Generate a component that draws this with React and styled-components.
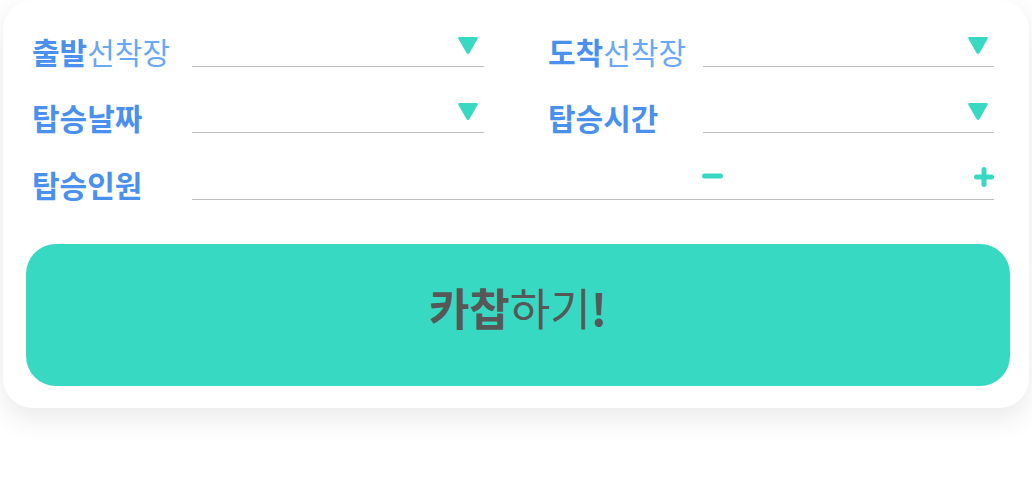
import React, { useState } from 'react';
import styled, { createGlobalStyle } from 'styled-components';

const GlobalStyle = createGlobalStyle`
  html, body {
    margin: 0;
    padding: 0;
    background: #ffffff;
    font-family: "Noto Sans CJK KR", "Noto Sans", sans-serif;
  }
`;

const Page = styled.div`
  width: 1032px;
  height: 496px;
  overflow: hidden;
  background: #ffffff;
`;

const Card = styled.div`
  margin: 0 3px;
  height: 408px;
  box-sizing: border-box;
  background: #ffffff;
  border-radius: 30px;
  box-shadow: 0 10px 28px rgba(0, 0, 0, 0.09);
  padding: 0 19px 22px 23px;
  display: flex;
  flex-direction: column;
`;

const Form = styled.div`
  padding: 0 16px 0 6px;
  display: flex;
  flex-direction: column;
`;

const Row = styled.div`
  display: flex;
  height: ${(p) => p.$h || 66}px;
  align-items: flex-end;
  gap: 64px;
`;

const Field = styled.div`
  display: flex;
  align-items: flex-end;
  width: ${(p) => (p.$w ? `${p.$w}px` : 'auto')};
  flex: ${(p) => (p.$w ? 'none' : 1)};
`;

const Label = styled.div`
  width: ${(p) => p.$w}px;
  flex-shrink: 0;
  font-size: 30px;
  line-height: 1;
  color: #4a90ee;
  font-weight: 700;
  padding-bottom: ${(p) => p.$pb || 1}px;
  white-space: nowrap;
`;

const Light = styled.span`
  font-weight: 400;
  color: #6aa7f4;
`;

const Line = styled.div`
  flex: 1;
  height: 40px;
  border-bottom: 1px solid #bdbdbd;
  display: flex;
  align-items: flex-start;
  justify-content: ${(p) => p.$justify || 'flex-end'};
  box-sizing: border-box;
  padding-right: ${(p) => p.$pr}px;
  padding-left: ${(p) => p.$pl || 0}px;
`;

const IconButton = styled.button`
  border: none;
  background: none;
  padding: 0;
  margin: 0;
  cursor: pointer;
  display: flex;
  margin-top: ${(p) => p.$mt || 0}px;
`;

const Submit = styled.button`
  margin-top: auto;
  height: 142px;
  border: none;
  border-radius: 30px;
  background: #38d9c3;
  color: #575757;
  font-family: "Noto Sans CJK KR", "Noto Sans", sans-serif;
  font-size: 44px;
  font-weight: 400;
  cursor: pointer;
  display: flex;
  align-items: center;
  justify-content: center;
  padding-bottom: 18px;
`;

const Bold = styled.b`
  font-weight: 700;
`;

const Triangle = () => (
  <svg width="22" height="19" viewBox="0 0 22 19">
    <path
      d="M2.5 1 H19.5 Q21.5 1 20.5 3 L12.5 17 Q11 19 9.5 17 L1.5 3 Q0.5 1 2.5 1 Z"
      fill="#38d9c3"
    />
  </svg>
);

const Minus = () => (
  <svg width="21" height="6" viewBox="0 0 21 6">
    <line x1="2.5" y1="3" x2="18.5" y2="3" stroke="#38d9c3" strokeWidth="5" strokeLinecap="round" />
  </svg>
);

const Plus = () => (
  <svg width="20" height="20" viewBox="0 0 20 20">
    <line x1="2.5" y1="10" x2="17.5" y2="10" stroke="#38d9c3" strokeWidth="5" strokeLinecap="round" />
    <line x1="10" y1="2.5" x2="10" y2="17.5" stroke="#38d9c3" strokeWidth="5" strokeLinecap="round" />
  </svg>
);

function Select({ label, w, lw, pb }) {
  return (
    <Field $w={w}>
      <Label $w={lw} $pb={pb}>{label}</Label>
      <Line $pr={5}>
        <IconButton $mt={9}><Triangle /></IconButton>
      </Line>
    </Field>
  );
}

export default function App() {
  const [count, setCount] = useState(1);

  return (
    <Page>
      <GlobalStyle />
      <Card>
        <Form>
          <Row $h={67}>
            <Select w={452} lw={160} label={<><span>출발</span><Light>선착장</Light></>} />
            <Select w={446} lw={155} label={<><span>도착</span><Light>선착장</Light></>} />
          </Row>
          <Row $h={66}>
            <Select w={452} lw={160} pb={0} label="탑승날짜" />
            <Select w={446} lw={155} pb={0} label="탑승시간" />
          </Row>
          <Row $h={67}>
            <Field>
              <Label $w={160} $pb={0}>탑승인원</Label>
              <Line $justify="space-between" $pl={510} $pr={0}>
                <IconButton $mt={13} onClick={() => setCount(Math.max(1, count - 1))}><Minus /></IconButton>
                <IconButton $mt={7} onClick={() => setCount(count + 1)}><Plus /></IconButton>
              </Line>
            </Field>
          </Row>
        </Form>
        <Submit>
          <Bold>카찹</Bold>하기<Bold>!</Bold>
        </Submit>
      </Card>
    </Page>
  );
}
